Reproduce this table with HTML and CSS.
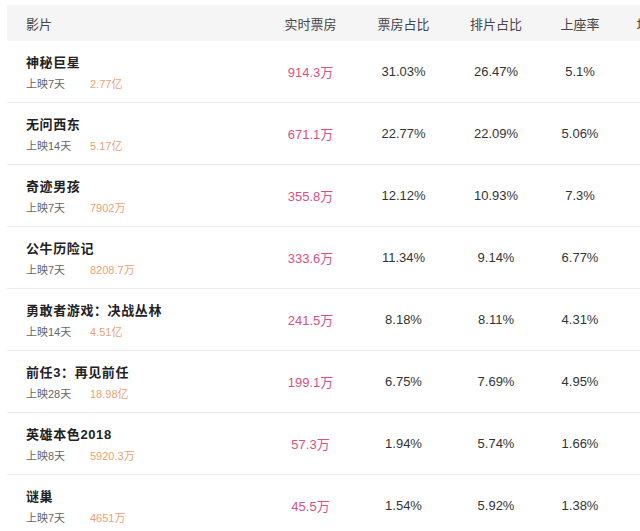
FILE: index.html
```
<!DOCTYPE html>
<html lang="zh-CN">
<head>
<meta charset="utf-8">
<title>实时票房</title>
<link rel="stylesheet" href="styles.css">
</head>
<body>
<div class="board">
  <div class="head">
    <div class="cell name-h">影片</div>
    <div class="cell">实时票房</div>
    <div class="cell">票房占比</div>
    <div class="cell">排片占比</div>
    <div class="cell">上座率</div>
    <div class="cell">场均人次</div>
  </div>

  <div class="row">
    <div class="name"><div class="title">神秘巨星</div><div class="sub"><span class="days">上映7天</span><span class="sum">2.77亿</span></div></div>
    <div class="cell live">914.3万</div><div class="cell">31.03%</div><div class="cell">26.47%</div><div class="cell">5.1%</div><div class="cell"></div>
  </div>
  <div class="row">
    <div class="name"><div class="title">无问西东</div><div class="sub"><span class="days">上映14天</span><span class="sum">5.17亿</span></div></div>
    <div class="cell live">671.1万</div><div class="cell">22.77%</div><div class="cell">22.09%</div><div class="cell">5.06%</div><div class="cell"></div>
  </div>
  <div class="row">
    <div class="name"><div class="title">奇迹男孩</div><div class="sub"><span class="days">上映7天</span><span class="sum">7902万</span></div></div>
    <div class="cell live">355.8万</div><div class="cell">12.12%</div><div class="cell">10.93%</div><div class="cell">7.3%</div><div class="cell"></div>
  </div>
  <div class="row">
    <div class="name"><div class="title">公牛历险记</div><div class="sub"><span class="days">上映7天</span><span class="sum">8208.7万</span></div></div>
    <div class="cell live">333.6万</div><div class="cell">11.34%</div><div class="cell">9.14%</div><div class="cell">6.77%</div><div class="cell"></div>
  </div>
  <div class="row">
    <div class="name"><div class="title">勇敢者游戏：决战丛林</div><div class="sub"><span class="days">上映14天</span><span class="sum">4.51亿</span></div></div>
    <div class="cell live">241.5万</div><div class="cell">8.18%</div><div class="cell">8.11%</div><div class="cell">4.31%</div><div class="cell"></div>
  </div>
  <div class="row">
    <div class="name"><div class="title">前任3：再见前任</div><div class="sub"><span class="days">上映28天</span><span class="sum">18.98亿</span></div></div>
    <div class="cell live">199.1万</div><div class="cell">6.75%</div><div class="cell">7.69%</div><div class="cell">4.95%</div><div class="cell"></div>
  </div>
  <div class="row">
    <div class="name"><div class="title">英雄本色2018</div><div class="sub"><span class="days">上映8天</span><span class="sum">5920.3万</span></div></div>
    <div class="cell live">57.3万</div><div class="cell">1.94%</div><div class="cell">5.74%</div><div class="cell">1.66%</div><div class="cell"></div>
  </div>
  <div class="row">
    <div class="name"><div class="title">谜巢</div><div class="sub"><span class="days">上映7天</span><span class="sum">4651万</span></div></div>
    <div class="cell live">45.5万</div><div class="cell">1.54%</div><div class="cell">5.92%</div><div class="cell">1.38%</div><div class="cell"></div>
  </div>
</div>
</body>
</html>
```
FILE: styles.css
```
html, body {
  margin: 0;
  padding: 0;
  background: #ffffff;
  overflow: hidden;
}

body {
  font-family: "Liberation Sans", "Noto Sans CJK SC", sans-serif;
  color: #333333;
}

.board {
  margin: 5px 0 0 7px;
  width: 700px;
}

.head,
.row {
  display: grid;
  grid-template-columns: 257px 93px 93px 92px 76px 89px;
  align-items: center;
}

.head {
  height: 36px;
  background: #f5f5f5;
  font-size: 13px;
  color: #444444;
}

.row {
  height: 61px;
  border-bottom: 1px solid #ececec;
  font-size: 13px;
}

.cell {
  text-align: center;
  white-space: nowrap;
}

.head .name-h {
  text-align: left;
  padding-left: 19px;
}

.name {
  align-self: stretch;
  padding: 13px 0 0 19px;
  display: flex;
  flex-direction: column;
  gap: 3px;
}

.title {
  font-size: 13px;
  line-height: 18px;
  font-weight: bold;
  letter-spacing: 0.6px;
  color: #222222;
}

.sub {
  display: flex;
  font-size: 11px;
  line-height: 18px;
  color: #666666;
}

.days {
  width: 64px;
  flex: none;
}

.sum {
  color: #ef9f74;
}

.live {
  color: #dc4f82;
}
```
